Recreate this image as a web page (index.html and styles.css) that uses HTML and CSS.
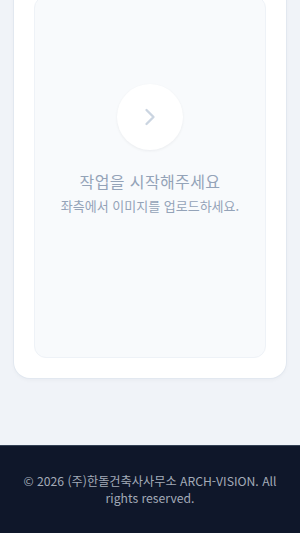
FILE: index.html
```html
<!DOCTYPE html>
<html lang="ko">
<head>
    <meta charset="UTF-8">
    <meta name="viewport" content="width=device-width, initial-scale=1.0">
    <title>ARCH-VISION</title>
    <link rel="stylesheet" href="styles.css">
</head>
<body>
    <main class="page">
        <section class="card">
            <div class="result">
                <div class="result-icon">
                    <svg width="28" height="28" viewBox="0 0 24 24" fill="none" stroke="currentColor" stroke-width="2" stroke-linecap="round" stroke-linejoin="round">
                        <polyline points="9 18 15 12 9 6"></polyline>
                    </svg>
                </div>
                <h2 class="result-title">작업을 시작해주세요</h2>
                <p class="result-text">좌측에서 이미지를 업로드하세요.</p>
            </div>
        </section>
    </main>
    <footer class="footer">
        <p>© 2026 (주)한돌건축사사무소 ARCH-VISION. All rights reserved.</p>
    </footer>
</body>
</html>
```

FILE: styles.css
```css
body {
    margin: 0;
    padding: 0;
    background-color: #f0f3f8;
    font-family: "Noto Sans CJK KR", "Noto Sans", sans-serif;
}

.page {
    padding: 0 14px 67px;
}

.card {
    margin-top: -24px;
    padding: 20px;
    background-color: #ffffff;
    border-radius: 16px;
    box-shadow: 0 0 0 1px #e2e8f0, 0 2px 4px rgba(15, 23, 42, 0.04);
}

.result {
    display: flex;
    flex-direction: column;
    align-items: center;
    padding: 87px 10px 141px;
    background-color: #f8fafc;
    border: 1px solid #eef2f7;
    border-radius: 12px;
}

.result-icon {
    width: 66px;
    height: 66px;
    border-radius: 50%;
    background-color: #ffffff;
    box-shadow: 0 1px 3px rgba(15, 23, 42, 0.06);
    display: flex;
    align-items: center;
    justify-content: center;
    color: #cbd5e1;
}

.result-title {
    margin: 19px 0 0;
    font-size: 16px;
    line-height: 24px;
    font-weight: 400;
    letter-spacing: 0.4px;
    color: #94a3b8;
}

.result-text {
    margin: 3px 0 0;
    font-size: 13px;
    line-height: 20px;
    color: #94a3b8;
}

.footer {
    background-color: #0f172a;
    border-top: 1px solid #334155;
    padding: 27px 16px 26px;
    text-align: center;
}

.footer p {
    margin: 0;
    font-size: 12.2px;
    line-height: 17px;
    color: #a3abb8;
}
```
